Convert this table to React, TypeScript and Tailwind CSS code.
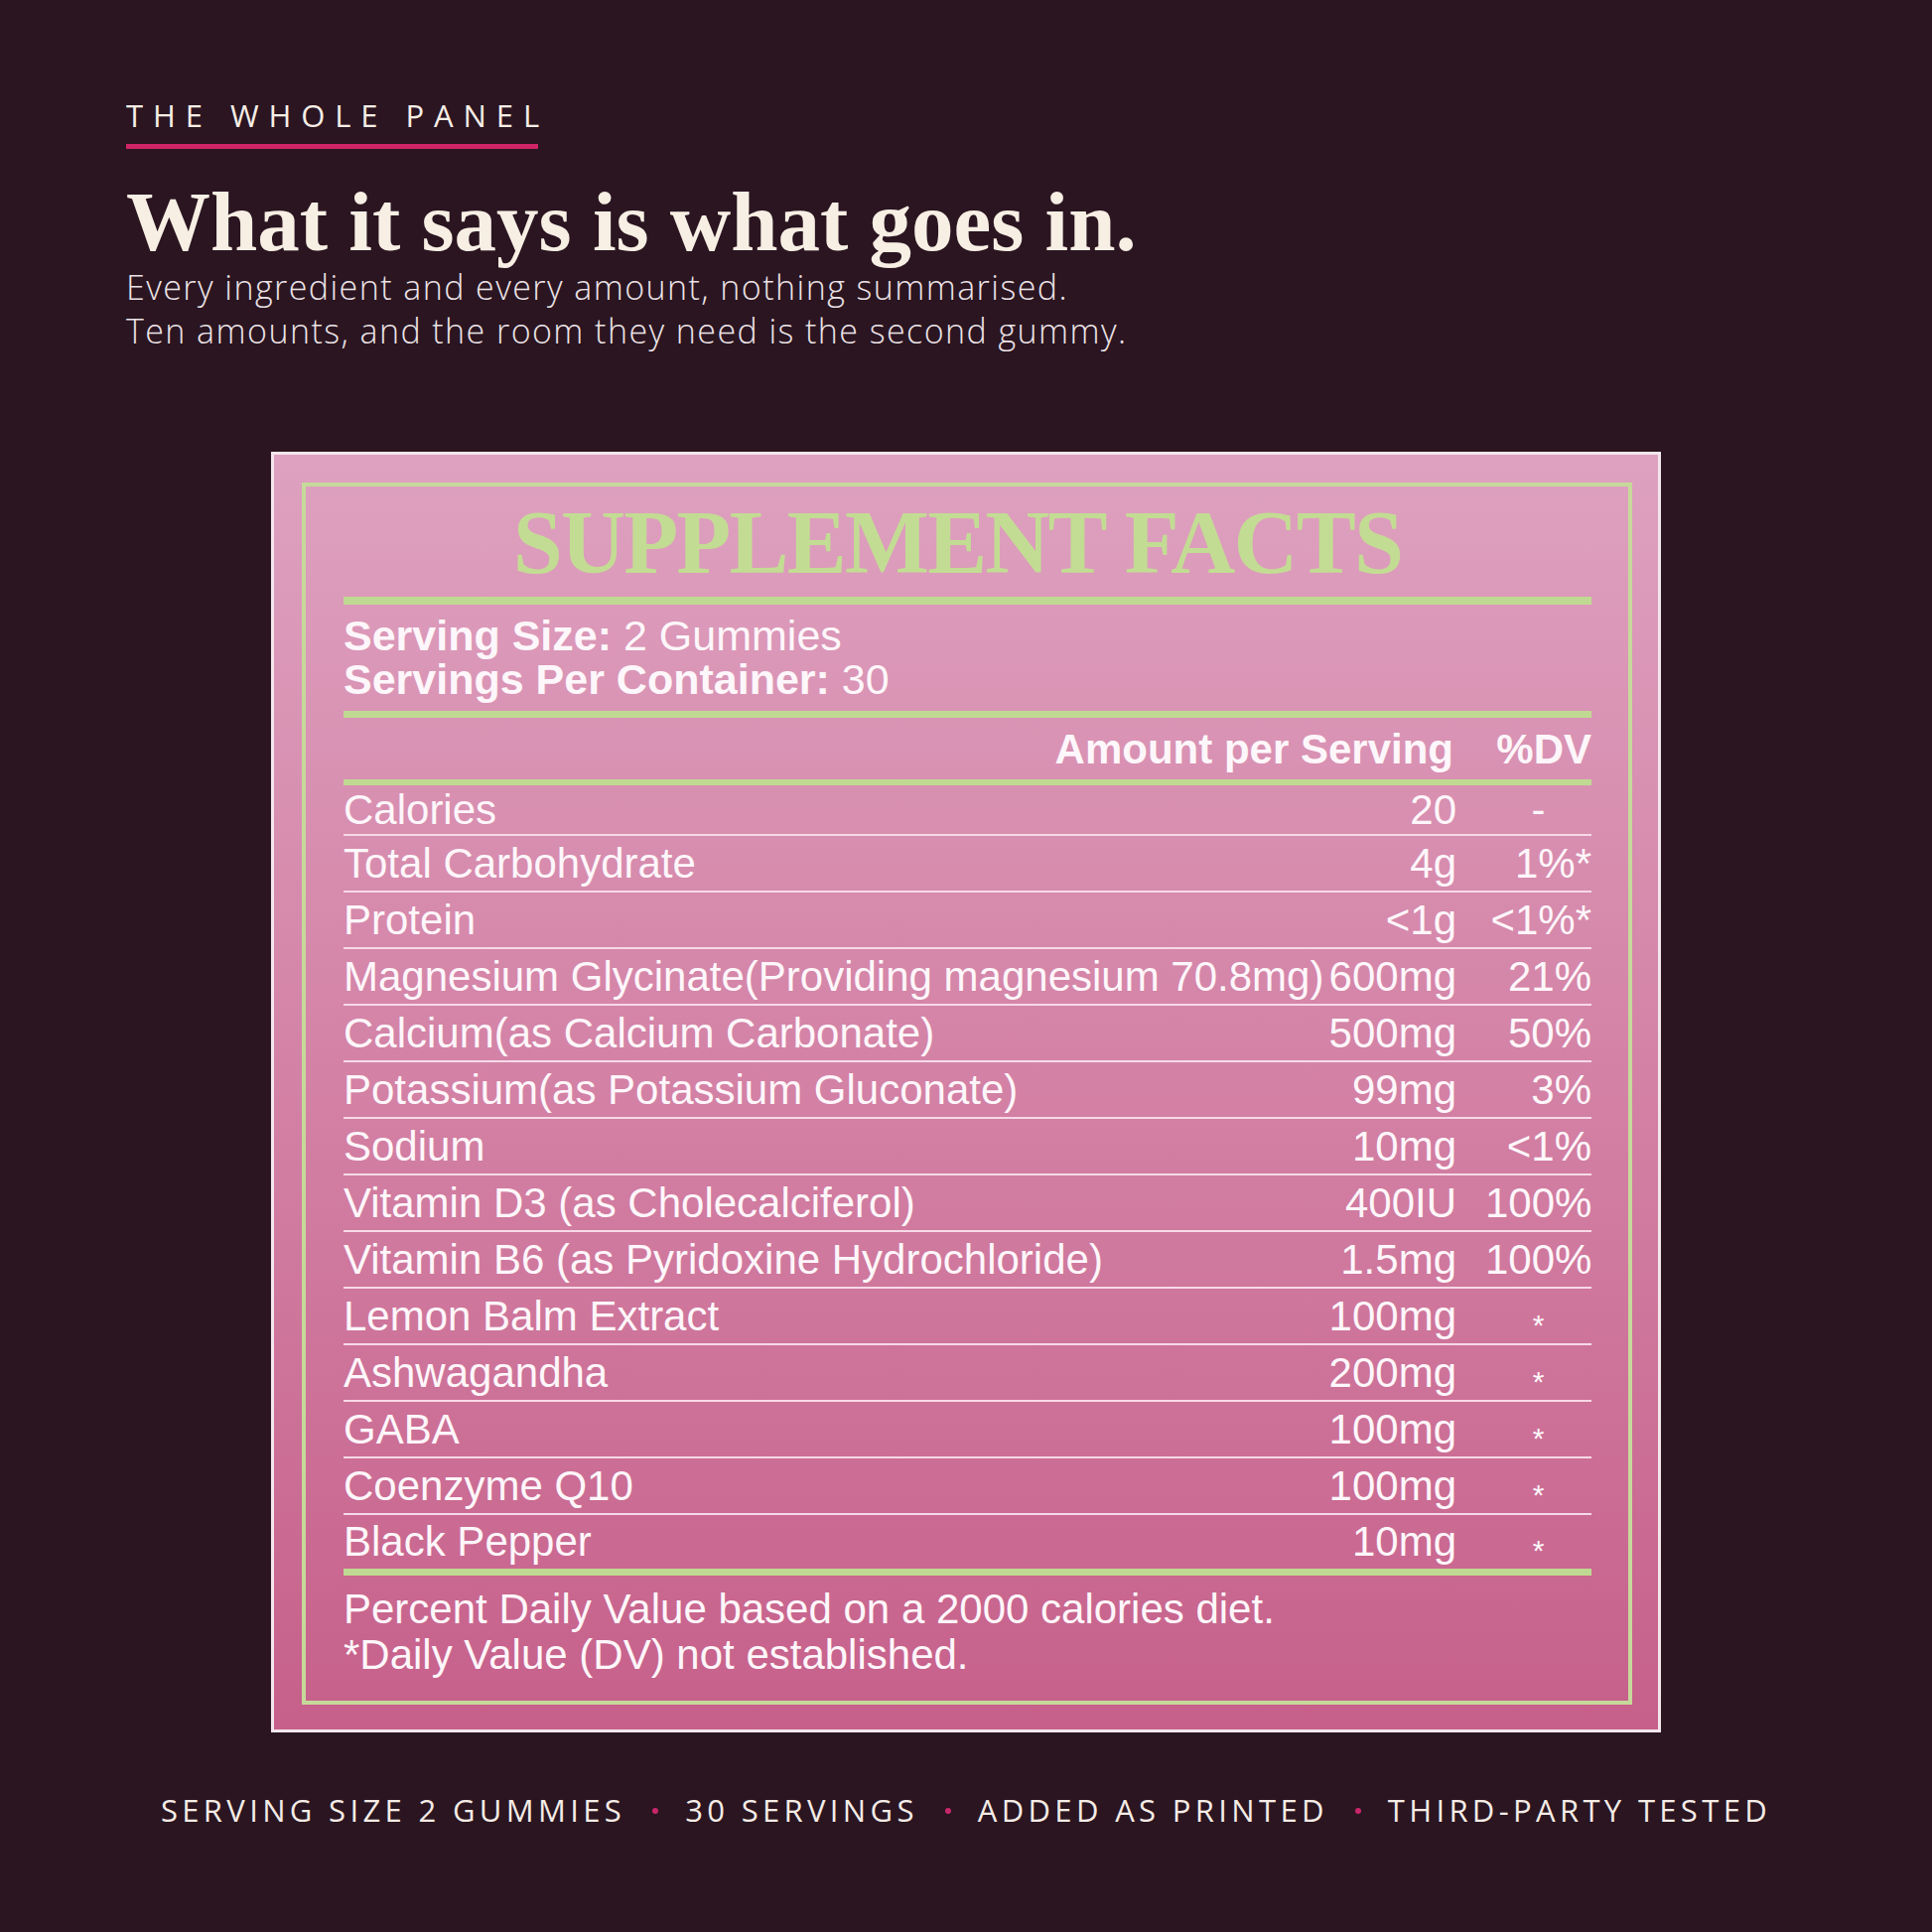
import React from "react";

type Row = {
  name: string;
  amount: string;
  dv: string;
};

const rows: Row[] = [
  { name: "Calories", amount: "20", dv: "-" },
  { name: "Total Carbohydrate", amount: "4g", dv: "1%*" },
  { name: "Protein", amount: "<1g", dv: "<1%*" },
  { name: "Magnesium Glycinate(Providing magnesium 70.8mg)", amount: "600mg", dv: "21%" },
  { name: "Calcium(as Calcium Carbonate)", amount: "500mg", dv: "50%" },
  { name: "Potassium(as Potassium Gluconate)", amount: "99mg", dv: "3%" },
  { name: "Sodium", amount: "10mg", dv: "<1%" },
  { name: "Vitamin D3 (as Cholecalciferol)", amount: "400IU", dv: "100%" },
  { name: "Vitamin B6 (as Pyridoxine Hydrochloride)", amount: "1.5mg", dv: "100%" },
  { name: "Lemon Balm Extract", amount: "100mg", dv: "*" },
  { name: "Ashwagandha", amount: "200mg", dv: "*" },
  { name: "GABA", amount: "100mg", dv: "*" },
  { name: "Coenzyme Q10", amount: "100mg", dv: "*" },
  { name: "Black Pepper", amount: "10mg", dv: "*" },
];

const footerItems = ["SERVING SIZE 2 GUMMIES", "30 SERVINGS", "ADDED AS PRINTED", "THIRD-PARTY TESTED"];

const sans = "font-['Open_Sans','Noto_Sans',sans-serif]";
const label = "font-['Liberation_Sans',Arial,sans-serif]";

export default function App() {
  return (
    <div className="flex h-[1946px] w-[1946px] flex-col bg-[#2a1521] text-[#f7eee6]">
      {/* heading block */}
      <header className="px-[127px] pt-[101px]">
        <p className={`${sans} text-[31px] font-medium uppercase leading-none tracking-[0.32em]`}>The Whole Panel</p>
        <div className="mt-[13px] h-[5px] w-[415px] bg-[#cf2465]" />
        <h1 className="mt-[31px] font-['Liberation_Serif','Times_New_Roman',serif] text-[85px] font-bold leading-none text-[#f8efe4]">
          What it says is what goes in.
        </h1>
        <p className={`${sans} mt-[2px] text-[34px] font-light leading-[43.5px] tracking-[0.042em] text-[#ece3e6]`}>
          Every ingredient and every amount, nothing summarised.
          <br />
          Ten amounts, and the room they need is the second gummy.
        </p>
      </header>

      {/* supplement facts label */}
      <section className="mx-auto mt-[100px] flex h-[1290px] w-[1400px] flex-col border-[3px] border-[#f3e6ec] bg-linear-to-b from-[#dea1c0] to-[#c6608a] pb-[25px] pl-[28px] pr-[26px] pt-[28px]">
        <div className={`${label} flex flex-1 flex-col border-4 border-[#c6d99a] pl-[38px] pr-[37px] pt-[12px] text-[42px] text-[#fdf6fa]`}>
          <h2 className="h-[90px] pr-[20px] text-center font-['Liberation_Serif','Times_New_Roman',serif] text-[90px] font-bold leading-none tracking-[-0.02em] text-[#c3dc93]">
            SUPPLEMENT FACTS
          </h2>
          <div className="mt-[9px] h-[8px] bg-[#c0d992]" />

          <div className="h-[107px] pt-[9px] text-[43px] leading-[44px]">
            <p>
              <span className="font-bold">Serving Size:</span> 2 Gummies
            </p>
            <p>
              <span className="font-bold">Servings Per Container:</span> 30
            </p>
          </div>
          <div className="h-[7px] bg-[#c0d992]" />

          <div className="flex h-[62px] items-center font-bold">
            <span className="flex-1 pr-[3px] text-right">Amount per Serving</span>
            <span className="ml-[29px] w-[107px] text-right">%DV</span>
          </div>
          <div className="h-[6px] bg-[#c0d992]" />

          <ul>
            {rows.map((row, i) => (
              <FactRow key={row.name} row={row} first={i === 0} last={i === rows.length - 1} />
            ))}
          </ul>
          <div className="h-[7px] bg-[#c0d992]" />

          <div className="pt-[11px] leading-[46px]">
            <p>Percent Daily Value based on a 2000 calories diet.</p>
            <p>*Daily Value (DV) not established.</p>
          </div>
        </div>
      </section>

      {/* footer strip */}
      <footer className={`${sans} mt-[63px] flex items-center justify-center gap-x-[27px] text-[31px] font-medium leading-none tracking-[0.14em] text-[#f5ece6]`}>
        {footerItems.map((item, i) => (
          <React.Fragment key={item}>
            {i > 0 && <span className="h-[6px] w-[6px] rounded-full bg-[#c8266a]" />}
            <span>{item}</span>
          </React.Fragment>
        ))}
      </footer>
    </div>
  );
}

function FactRow({ row, first, last }: { row: Row; first: boolean; last: boolean }) {
  const height = first ? "h-[51px]" : last ? "h-[54px]" : "h-[57px]";
  const border = last ? "" : "border-b-2 border-[#f6d9e7]";
  const centered = row.dv === "-" || row.dv === "*";

  return (
    <li className={`flex items-center whitespace-nowrap leading-none ${height} ${border}`}>
      <span className="min-w-0 flex-1">{row.name}</span>
      <span className="text-right">{row.amount}</span>
      <span className={`ml-[29px] w-[107px] ${centered ? "text-center" : "text-right"}`}>
        {row.dv === "*" ? <span className="relative top-[5px] text-[30px]">*</span> : row.dv}
      </span>
    </li>
  );
}
